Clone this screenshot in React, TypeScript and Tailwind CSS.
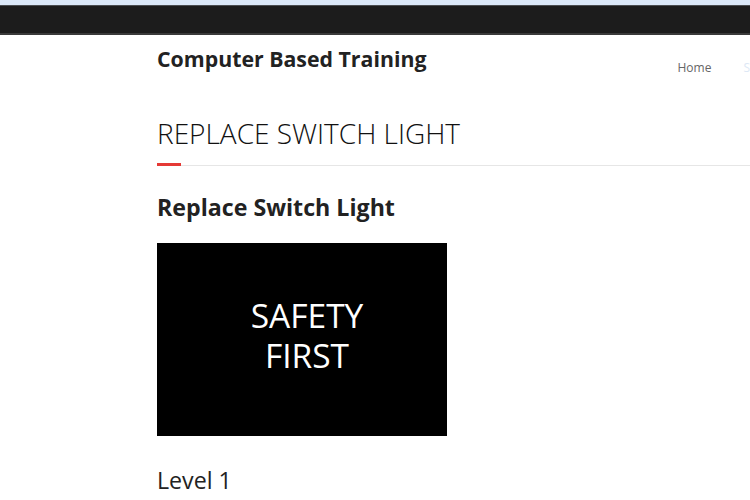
import React from 'react';

const App: React.FC = () => {
  return (
    <div className="min-h-screen bg-white text-[#222] font-['Open_Sans',sans-serif] overflow-hidden">
      <div className="h-[5px] bg-[#dbe8f8]" />
      <div className="h-[30px] bg-[#1c1c1c] border-t border-[#4a4d50] border-b-2 border-b-[#3a3a3a]" />
      <main className="pl-[157px]">
        <header className="flex items-start justify-between h-[62px]">
          <h1 className="mt-[8px] text-[21.3px] font-bold leading-[32px] text-[#222]">Computer Based Training</h1>
          <nav className="mt-[24px] flex gap-8 text-[12px] text-[#666]">
            <span>Home</span>
            <span className="text-[#dde8f5]">S</span>
          </nav>
        </header>
        <div className="relative mt-[18px] border-b border-[#e6e6e6] pb-[14px]">
          <h2 className="text-[28px] font-light leading-[36px] text-[#111]">REPLACE SWITCH LIGHT</h2>
          <div className="absolute left-0 bottom-[-1px] w-[24px] h-[3px] bg-[#e53935]" />
        </div>
        <h3 className="mt-[26px] text-[23.2px] font-bold leading-[30px] text-[#222]">Replace Switch Light</h3>
        <div className="mt-[21px] w-[290px] h-[193px] pb-[10px] pl-[10px] bg-black flex items-center justify-center">
          <p className="w-[140px] text-white text-[33.5px] leading-[40px] text-center">SAFETY FIRST</p>
        </div>
        <p className="mt-[29px] text-[23.2px] leading-[30px] text-[#222]">Level 1</p>
      </main>
    </div>
  );
};

export default App;
